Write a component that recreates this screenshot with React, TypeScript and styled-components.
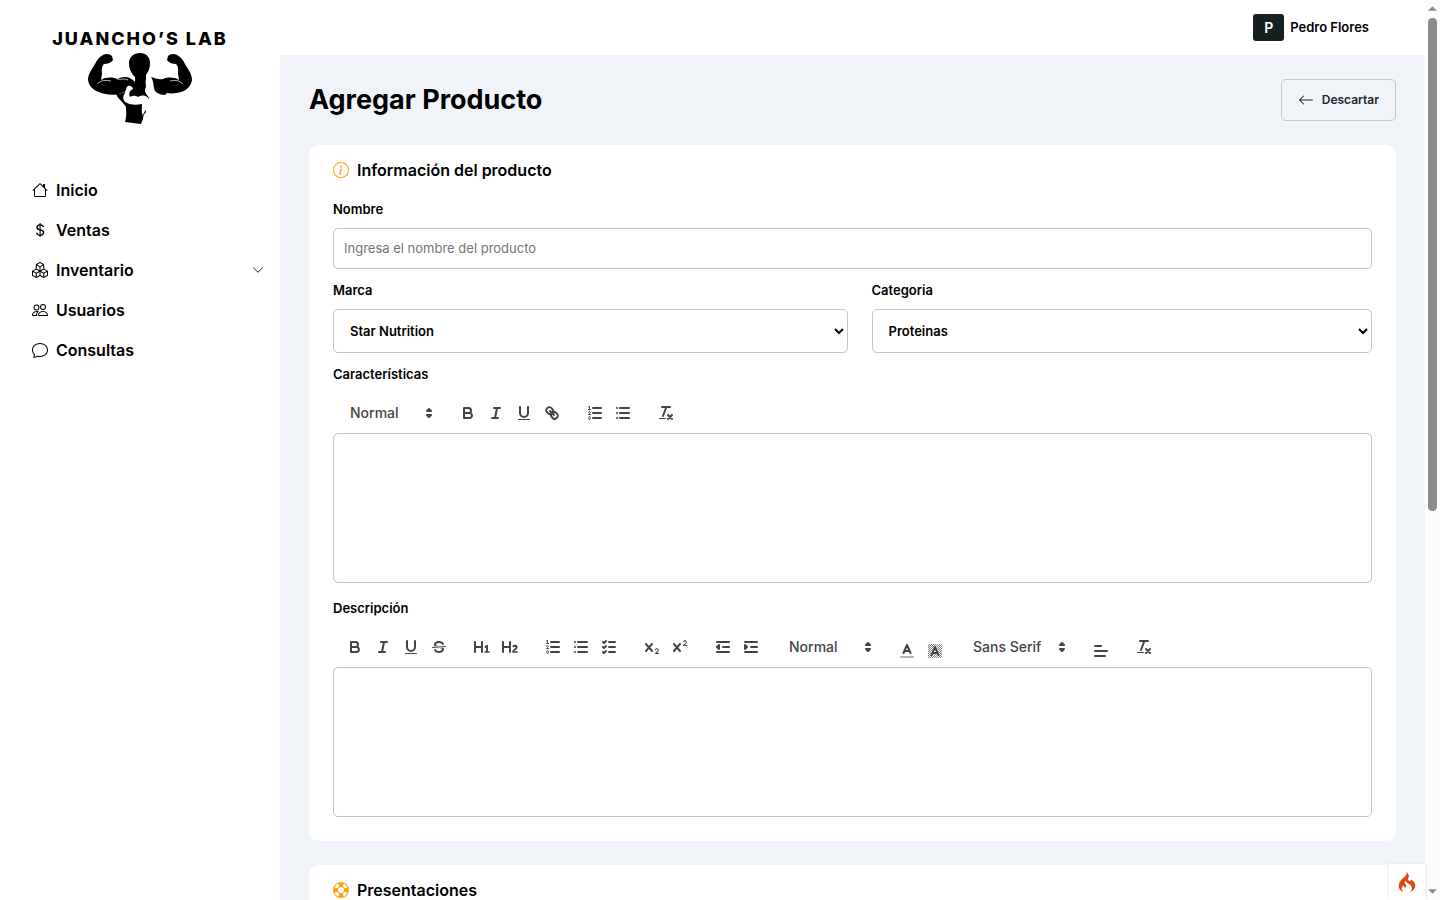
import React from 'react';
import styled, { createGlobalStyle } from 'styled-components';
import {
  BsArrowLeft,
  BsBoxes,
  BsChat,
  BsChevronDown,
  BsCurrencyDollar,
  BsHouse,
  BsInfoCircle,
  BsLifePreserver,
  BsPeople,
} from 'react-icons/bs';
import { SiCodeigniter } from 'react-icons/si';

const GlobalStyle = createGlobalStyle`
  *, *::before, *::after { box-sizing: border-box; }
  body {
    margin: 0;
    background: #f0f4f9;
    color: #000;
    font-family: Inter, "Liberation Sans", sans-serif;
    font-size: 13px;
  }
  button, input, select, textarea { font: inherit; color: inherit; }
`;

const Shell = styled.div`
  display: grid;
  grid-template-columns: 280px minmax(0, 1fr) 15px;
  height: 100vh;
  overflow: hidden;
`;

/* Sidebar */

const Sidebar = styled.aside`
  background: #fff;
`;

const Brand = styled.a`
  display: flex;
  flex-direction: column;
  align-items: center;
  height: 170px;
  padding-top: 28px;
  color: #000;
  text-decoration: none;
`;

const BrandName = styled.span`
  font-size: 18px;
  font-weight: 800;
  line-height: 22px;
  letter-spacing: 2px;
  white-space: nowrap;
`;

const BrandFigure = styled.svg`
  width: 110px;
  height: 78px;
`;

const NavList = styled.ul`
  margin: 0;
  padding: 0 20px 0 32px;
  list-style: none;
`;

const NavLink = styled.a`
  display: flex;
  align-items: center;
  gap: 8px;
  height: 40px;
  color: #000;
  font-size: 16px;
  font-weight: 600;
  text-decoration: none;
`;

const NavChevron = styled(BsChevronDown)`
  width: 12px;
  height: 12px;
  margin-left: auto;
  margin-right: -4px;
  color: #012970;
`;

/* Top bar */

const Page = styled.div`
  display: flex;
  flex-direction: column;
  min-width: 0;
  overflow: hidden;
`;

const TopBar = styled.header`
  display: flex;
  flex: none;
  align-items: center;
  justify-content: flex-end;
  height: 55px;
  padding-right: 56px;
  background: #fff;
`;

const UserButton = styled.button`
  display: flex;
  align-items: center;
  gap: 6px;
  padding: 0;
  border: 0;
  background: none;
  font-weight: 600;
  line-height: 27px;
`;

const Avatar = styled.span`
  width: 31px;
  border-radius: 3px;
  background: #162021;
  color: #fff;
  font-size: 14px;
  text-align: center;
`;

/* Content */

const Content = styled.main`
  display: flex;
  flex-direction: column;
  gap: 24px;
  padding: 24px 29px;
`;

const TitleRow = styled.div`
  display: flex;
  align-items: center;
  justify-content: space-between;
`;

const PageTitle = styled.h1`
  margin: 0;
  font-size: 27px;
  font-weight: 700;
  line-height: 34px;
`;

const DiscardButton = styled.button`
  display: flex;
  align-items: center;
  gap: 8px;
  height: 42px;
  padding: 0 16px;
  border: 1px solid #c4c8cb;
  border-radius: 5px;
  background: none;
  color: #212529;
  font-size: 12px;
  font-weight: 600;
  line-height: 18px;
`;

const Card = styled.section`
  padding: 13px 24px 24px;
  border-radius: 10px;
  background: #fff;
`;

const CardTitle = styled.h2`
  display: flex;
  align-items: center;
  gap: 8px;
  margin: 0 0 18px;
  font-size: 16px;
  font-weight: 600;
  line-height: 24px;

  svg { color: #ff9f0a; }
`;

const Field = styled.div<{ $gap?: number }>`
  display: flex;
  flex-direction: column;
  margin-bottom: ${({ $gap = 12 }) => $gap}px;
`;

const FieldLabel = styled.label`
  margin-bottom: 10px;
  font-weight: 600;
  line-height: 18px;
`;

const TextInput = styled.input`
  height: 41px;
  padding: 0 10px 1px;
  border: 1px solid #c4c4c4;
  border-radius: 5px;
  background: #fff;

  &::placeholder { color: #757575; }
`;

const SelectInput = styled.select`
  width: 100%;
  height: 44px;
  padding: 0 0 0 12px;
  border: 1px solid #c4c4c4;
  border-radius: 5px;
  background: #fff;
  font-weight: 600;
`;

const FieldPair = styled.div`
  display: grid;
  grid-template-columns: calc(50% - 5px) minmax(0, 1fr);
  column-gap: 24px;
`;

/* Rich text editor */

const Toolbar = styled.div`
  display: flex;
  flex-wrap: wrap;
  gap: 15px;
  padding: 8px;
  color: #444;
`;

const ToolGroup = styled.div`
  display: flex;
  height: 24px;
`;

const ToolButton = styled.button<{ $low?: boolean }>`
  width: 28px;
  height: 24px;
  padding: ${({ $low }) => ($low ? '7px 5px 0' : '3px 5px')};
  border: 0;
  background: none;
`;

const Glyph = styled.svg`
  display: block;
  width: 18px;
  height: 18px;
  overflow: visible;
  fill: none;
  stroke: #444;
  stroke-width: 2;
  stroke-linecap: round;
  stroke-linejoin: round;

  .fill { fill: #444; stroke: none; }
  .solid { fill: #444; }
  .thin { stroke-width: 1; }
  .faint { opacity: 0.4; }
`;

const PickerBox = styled.span<{ $wide?: boolean }>`
  display: grid;
  grid-template-columns: minmax(0, 1fr) 18px;
  align-items: center;
  width: ${({ $wide }) => ($wide ? 108 : 98)}px;
  padding-right: 1px;
`;

const PickerSelect = styled.select`
  grid-area: 1 / 1 / 2 / 3;
  height: 24px;
  padding: 0 0 2px 9px;
  border: 0;
  background: none;
  appearance: none;
  font-size: 14px;
  font-weight: 500;
`;

const PickerArrows = styled(Glyph)`
  grid-area: 1 / 2;
  pointer-events: none;
`;

const EditorArea = styled.textarea`
  display: block;
  height: 150px;
  padding: 12px 15px;
  border: 1px solid #c4c4c4;
  border-radius: 5px;
  background: #fff;
  resize: none;
`;

/* Page chrome */

const DebugButton = styled.button`
  position: fixed;
  right: 15px;
  bottom: 0;
  display: grid;
  place-items: center;
  width: 36px;
  height: 36px;
  padding: 0;
  border: 0;
  background: #fff;
  box-shadow: 0 0 4px #dfdfdf;
  color: #dd4814;
`;

const ScrollTrack = styled.div`
  display: flex;
  flex-direction: column;
  align-items: center;
  justify-content: space-between;
  padding: 6px 0;
  background: #fcfcfc;
`;

const ScrollThumb = styled.div`
  flex: none;
  width: 9px;
  height: calc(55vh - 2px);
  margin: 7px 0 auto;
  border-radius: 5px;
  background: #8b8b8b;
`;

const ScrollArrow = styled.svg`
  flex: none;
  width: 9px;
  height: 5px;
  fill: #8b8b8b;
`;

const glyphs = {
  bold: (
    <>
      <path d="M5,4H9.5A2.5,2.5,0,0,1,12,6.5v0A2.5,2.5,0,0,1,9.5,9H5Z" />
      <path d="M5,9h5.5A2.5,2.5,0,0,1,13,11.5v0A2.5,2.5,0,0,1,10.5,14H5Z" />
    </>
  ),
  italic: <path d="M7,4H13M5,14H11M8,14L10,4" />,
  underline: (
    <>
      <path d="M5,3V9a4.012,4.012,0,0,0,4,4H9a4.012,4.012,0,0,0,4-4V3" />
      <rect className="fill" x="3" y="15" width="12" height="1" rx=".5" />
    </>
  ),
  strike: (
    <>
      <path className="thin" d="M15.5,8.5L2.5,9.5" />
      <path className="fill" d="M9.007,8C6.542,7.791,6,7.519,6,6.5,6,5.792,7.283,5,9,5c1.571,0,2.765.679,2.969,1.309a1,1,0,0,0,1.9-.617C13.356,4.106,11.354,3,9,3,6.2,3,4,4.538,4,6.5a3.2,3.2,0,0,0,.5,1.843Z" />
      <path className="fill" d="M8.984,10C11.457,10.208,12,10.479,12,11.5c0,0.708-1.283,1.5-3,1.5-1.571,0-2.765-.679-2.969-1.309a1,1,0,1,0-1.9.617C4.644,13.894,6.646,15,9,15c2.8,0,5-1.538,5-3.5a3.2,3.2,0,0,0-.5-1.843Z" />
    </>
  ),
  link: (
    <>
      <path d="M7,7L11,11" />
      <path d="M8.9,4.577a3.476,3.476,0,0,1,.36,4.679A3.476,3.476,0,0,1,4.577,8.9C3.185,7.5,2.035,6.4,4.217,4.217S7.5,3.185,8.9,4.577Z" />
      <path d="M13.423,9.1a3.476,3.476,0,0,0-4.679-.36,3.476,3.476,0,0,0,.36,4.679c1.392,1.392,2.5,2.542,4.679.36S14.815,10.5,13.423,9.1Z" />
    </>
  ),
  ordered: (
    <>
      <path d="M7,4H15M7,9H15M7,14H15" />
      <path className="thin" d="M2.5,5.5H4.5" />
      <path className="fill" d="M3.5,6A0.5,0.5,0,0,1,3,5.5V3.085l-0.276.138A0.5,0.5,0,0,1,2.053,3c-0.124-.247-0.023-0.324.224-0.447l1-.5A0.5,0.5,0,0,1,4,2.5v3A0.5,0.5,0,0,1,3.5,6Z" />
      <path className="thin" d="M4.5,10.5h-2c0-.234,1.85-1.076,1.85-2.234A0.959,0.959,0,0,0,2.5,8.156" />
      <path className="thin" d="M2.5,14.846a0.959,0.959,0,0,0,1.85-.109A0.7,0.7,0,0,0,3.75,14a0.688,0.688,0,0,0,.6-0.736,0.959,0.959,0,0,0-1.85-.109" />
    </>
  ),
  bullet: <path d="M6,4H15M6,9H15M6,14H15M3,4H3M3,9H3M3,14H3" />,
  check: <path d="M9,4H15M9,9H15M9,14H15M3,4L4,5L6,3M3,14L4,15L6,13M3,9L4,10L6,8" />,
  h1: (
    <path className="fill" d="M10,4V14a1,1,0,0,1-2,0V10H3v4a1,1,0,0,1-2,0V4A1,1,0,0,1,3,4V8H8V4a1,1,0,0,1,2,0Zm6.06787,9.209H14.98975V7.59863a.54085.54085,0,0,0-.605-.60547h-.62744a1.01119,1.01119,0,0,0-.748.29688L11.645,8.56641a.5435.5435,0,0,0-.022.8584l.28613.30762a.53861.53861,0,0,0,.84717.0332l.09912-.08789a1.2137,1.2137,0,0,0,.2417-.35254h.02246s-.01123.30859-.01123.60547V13.209H12.041a.54085.54085,0,0,0-.605.60547v.43945a.54085.54085,0,0,0,.605.60547h4.02686a.54085.54085,0,0,0,.605-.60547v-.43945A.54085.54085,0,0,0,16.06787,13.209Z" />
  ),
  h2: (
    <path className="fill" d="M16.73975,13.81445v.43945a.54085.54085,0,0,1-.605.60547H11.855a.58392.58392,0,0,1-.64893-.60547V14.0127c0-2.90527,3.39941-3.42187,3.39941-4.55469a.77675.77675,0,0,0-.84717-.78125,1.17684,1.17684,0,0,0-.83594.38477c-.2749.26367-.561.374-.85791.13184l-.4292-.34082c-.30811-.24219-.38525-.51758-.1543-.81445a2.97155,2.97155,0,0,1,2.45361-1.17676,2.45393,2.45393,0,0,1,2.68408,2.40918c0,2.45312-3.1792,2.92676-3.27832,3.93848h2.79443A.54085.54085,0,0,1,16.73975,13.81445ZM9,3A.99974.99974,0,0,0,8,4V8H3V4A1,1,0,0,0,1,4V14a1,1,0,0,0,2,0V10H8v4a1,1,0,0,0,2,0V4A.99974.99974,0,0,0,9,3Z" />
  ),
  sub: (
    <>
      <path className="fill" d="M15.5,15H13.861a3.858,3.858,0,0,0,1.914-2.975,1.8,1.8,0,0,0-1.6-1.751A1.921,1.921,0,0,0,12.021,11.7a0.50013,0.50013,0,1,0,.957.291h0a0.914,0.914,0,0,1,1.053-.725,0.81,0.81,0,0,1,.744.762c0,1.076-1.16971,1.86982-1.93971,2.43082A1.45639,1.45639,0,0,0,12,15.5a0.5,0.5,0,0,0,.5.5h3A0.5,0.5,0,0,0,15.5,15Z" />
      <path className="fill" d="M9.65,5.241a1,1,0,0,0-1.409.108L6,7.964,3.759,5.349A1,1,0,0,0,2.192,6.59178Q2.21541,6.6213,2.241,6.649L4.684,9.5,2.241,12.35A1,1,0,0,0,3.71,13.70722q0.02557-.02768.049-0.05722L6,11.036,8.241,13.65a1,1,0,1,0,1.567-1.24277Q9.78459,12.3777,9.759,12.35L7.316,9.5,9.759,6.651A1,1,0,0,0,9.65,5.241Z" />
    </>
  ),
  sup: (
    <>
      <path className="fill" d="M15.5,7H13.861a4.015,4.015,0,0,0,1.914-2.975,1.8,1.8,0,0,0-1.6-1.751A1.922,1.922,0,0,0,12.021,3.7a0.5,0.5,0,1,0,.957.291,0.917,0.917,0,0,1,1.053-.725,0.81,0.81,0,0,1,.744.762c0,1.077-1.164,1.925-1.934,2.486A1.423,1.423,0,0,0,12,7.5a0.5,0.5,0,0,0,.5.5h3A0.5,0.5,0,0,0,15.5,7Z" />
      <path className="fill" d="M9.651,5.241a1,1,0,0,0-1.41.108L6,7.964,3.759,5.349a1,1,0,1,0-1.519,1.3L4.683,9.5,2.241,12.35a1,1,0,1,0,1.519,1.3L6,11.036,8.241,13.65a1,1,0,0,0,1.519-1.3L7.317,9.5,9.759,6.651A1,1,0,0,0,9.651,5.241Z" />
    </>
  ),
  outdent: (
    <>
      <path d="M3,14H15M3,4H15M9,9H15" />
      <path d="M5,7V11L3,9Z" />
    </>
  ),
  indent: (
    <>
      <path d="M3,14H15M3,4H15M9,9H15" />
      <path className="solid" d="M3,7V11L5,9Z" />
    </>
  ),
  color: (
    <>
      <path className="faint" d="M3,15H15" />
      <path d="M5.5,11L9,3L12.5,11M11.63,9H6.38" />
    </>
  ),
  background: (
    <>
      <path
        className="thin"
        strokeLinecap="butt"
        strokeDasharray="1 .4"
        d="M2,4L4,2M2,6L6,2M2,8L8,2M2,10L10,2M2,12L12,2M2,14L14,2M2,16L16,2M4,16L16,4M6,16L16,6M8,16L16,8M10,16L16,10M12,16L16,12M14,16L16,14"
      />
      <path stroke="#fff" strokeWidth="3" d="M6,12L9,6L12,12" />
      <path d="M5.5,13L9,5L12.5,13M11.63,11H6.38" />
    </>
  ),
  align: <path d="M3,9H15M3,14H13M3,4H9" />,
  clean: (
    <>
      <path d="M5,3H13M6,12L9.35,3M11,11L15,15M15,11L11,15" />
      <rect className="fill" x="2" y="14" width="7" height="1" rx=".5" />
    </>
  ),
};

type GlyphName = keyof typeof glyphs;

const lowered: GlyphName[] = ['color', 'background', 'align'];

function Tools({ names }: { names: [GlyphName, string][] }) {
  return (
    <ToolGroup>
      {names.map(([name, label]) => (
        <ToolButton key={name} type="button" aria-label={label} $low={lowered.includes(name)}>
          <Glyph viewBox="0 0 18 18" aria-hidden="true">
            {glyphs[name]}
          </Glyph>
        </ToolButton>
      ))}
    </ToolGroup>
  );
}

function Picker({ label, options, wide }: { label: string; options: string[]; wide?: boolean }) {
  return (
    <PickerBox $wide={wide}>
      <PickerSelect aria-label={label}>
        {options.map((option) => (
          <option key={option}>{option}</option>
        ))}
      </PickerSelect>
      <PickerArrows viewBox="0 0 18 18" aria-hidden="true">
        <path className="solid" d="M7,11L9,13L11,11ZM7,7L9,5L11,7Z" />
      </PickerArrows>
    </PickerBox>
  );
}

const navItems = [
  { label: 'Inicio', Icon: BsHouse },
  { label: 'Ventas', Icon: BsCurrencyDollar },
  { label: 'Inventario', Icon: BsBoxes, expandable: true },
  { label: 'Usuarios', Icon: BsPeople },
  { label: 'Consultas', Icon: BsChat },
];

function Logo() {
  return (
    <Brand href="#inicio">
      <BrandName>JUANCHO’S LAB</BrandName>
      <BrandFigure viewBox="85 50 110 78" aria-hidden="true">
        <path d="M140,53C146,53 150,57 150,63C150,69 148,72 146,75L146,79C145,82 146,84 146,87C144,90 145,92 147,95L149,98L145,107L146,112C144,114 143,116 143,119L141,124L125,122C127,116 126,111 126,107C123,102 118,99 116,94C121,94 126,92 130,89L135,86L135,77C132,74 129,70 129,63C129,57 134,53 140,53Z" />
        <path d="M103,55C106,53 110,54 112,56L113,60C111,63 107,64 104,64C101,67 102,71 102,74L101,80C106,77 112,77 117,79C123,76 130,76 135,82L135,87C131,88 127,91 122,93C114,96 106,95 99,92C93,90 89,86 88,80C88,74 92,69 95,64C97,60 99,57 103,55Z" />
        <path d="M177,55C174,53 170,54 168,56L167,60C169,63 173,64 176,64C179,67 178,71 178,74L179,80C174,77 168,77 163,79C159,80 155,78 151,77C154,81 153,87 155,91C158,94 162,95 165,95L167,93C172,94 177,93 181,92C187,90 191,86 192,80C192,74 188,69 185,64C183,60 181,57 177,55Z" />
        <path
          fill="#fff"
          d="M128,86C130,85 133,87 133,89L130,91C129,93 129,95 130,97C133,95 136,96 138,97C141,95 145,95 147,97C150,99 149,102 147,104C146,107 147,109 145,111C144,113 143,114 143,116C141,112 142,108 142,104C136,105 131,105 127,103C123,101 122,97 125,93C126,90 126,87 128,86Z"
        />
        <path
          fill="none"
          stroke="#fff"
          strokeWidth=".7"
          d="M97,84C101,80 106,80 111,81M117,79C121,80 125,78 128,80M183,84C179,80 175,80 170,81M132,101C136,101 138,100 140,98"
        />
      </BrandFigure>
    </Brand>
  );
}

export default function App() {
  return (
    <>
      <GlobalStyle />
      <Shell>
        <Sidebar>
          <Logo />
          <nav>
            <NavList>
              {navItems.map(({ label, Icon, expandable }) => (
                <li key={label}>
                  <NavLink href={`#${label.toLowerCase()}`}>
                    <Icon aria-hidden="true" />
                    {label}
                    {expandable && <NavChevron aria-hidden="true" />}
                  </NavLink>
                </li>
              ))}
            </NavList>
          </nav>
        </Sidebar>

        <Page>
          <TopBar>
            <UserButton type="button">
              <Avatar>P</Avatar>
              Pedro Flores
            </UserButton>
          </TopBar>

          <Content>
            <TitleRow>
              <PageTitle>Agregar Producto</PageTitle>
              <DiscardButton type="button">
                <BsArrowLeft size={16} aria-hidden="true" />
                Descartar
              </DiscardButton>
            </TitleRow>

            <Card>
              <CardTitle>
                <BsInfoCircle aria-hidden="true" />
                Información del producto
              </CardTitle>

              <Field>
                <FieldLabel htmlFor="nombre">Nombre</FieldLabel>
                <TextInput id="nombre" type="text" placeholder="Ingresa el nombre del producto" />
              </Field>

              <FieldPair>
                <Field>
                  <FieldLabel htmlFor="marca">Marca</FieldLabel>
                  <SelectInput id="marca">
                    <option>Star Nutrition</option>
                  </SelectInput>
                </Field>
                <Field>
                  <FieldLabel htmlFor="categoria">Categoria</FieldLabel>
                  <SelectInput id="categoria">
                    <option>Proteinas</option>
                  </SelectInput>
                </Field>
              </FieldPair>

              <Field $gap={16}>
                <FieldLabel htmlFor="caracteristicas">Características</FieldLabel>
                <Toolbar role="toolbar" aria-label="Formato de características">
                  <Picker label="Encabezado" options={['Normal']} />
                  <Tools names={[['bold', 'Negrita'], ['italic', 'Cursiva'], ['underline', 'Subrayado'], ['link', 'Enlace']]} />
                  <Tools names={[['ordered', 'Lista numerada'], ['bullet', 'Lista']]} />
                  <Tools names={[['clean', 'Quitar formato']]} />
                </Toolbar>
                <EditorArea id="caracteristicas" />
              </Field>

              <Field $gap={0}>
                <FieldLabel htmlFor="descripcion">Descripción</FieldLabel>
                <Toolbar role="toolbar" aria-label="Formato de descripción">
                  <Tools names={[['bold', 'Negrita'], ['italic', 'Cursiva'], ['underline', 'Subrayado'], ['strike', 'Tachado']]} />
                  <Tools names={[['h1', 'Encabezado 1'], ['h2', 'Encabezado 2']]} />
                  <Tools names={[['ordered', 'Lista numerada'], ['bullet', 'Lista'], ['check', 'Lista de tareas']]} />
                  <Tools names={[['sub', 'Subíndice'], ['sup', 'Superíndice']]} />
                  <Tools names={[['outdent', 'Reducir sangría'], ['indent', 'Aumentar sangría']]} />
                  <Picker label="Encabezado" options={['Normal']} />
                  <Tools names={[['color', 'Color de texto'], ['background', 'Color de fondo']]} />
                  <Picker label="Fuente" options={['Sans Serif']} wide />
                  <Tools names={[['align', 'Alineación']]} />
                  <Tools names={[['clean', 'Quitar formato']]} />
                </Toolbar>
                <EditorArea id="descripcion" />
              </Field>
            </Card>

            <Card>
              <CardTitle>
                <BsLifePreserver aria-hidden="true" />
                Presentaciones
              </CardTitle>
            </Card>
          </Content>
        </Page>

        <ScrollTrack aria-hidden="true">
          <ScrollArrow viewBox="0 0 10 5"><path d="M0,5L5,0L10,5Z" /></ScrollArrow>
          <ScrollThumb />
          <ScrollArrow viewBox="0 0 10 5"><path d="M0,0L5,5L10,0Z" /></ScrollArrow>
        </ScrollTrack>
      </Shell>
      <DebugButton type="button" aria-label="Barra de depuración">
        <SiCodeigniter size={20} aria-hidden="true" />
      </DebugButton>
    </>
  );
}
